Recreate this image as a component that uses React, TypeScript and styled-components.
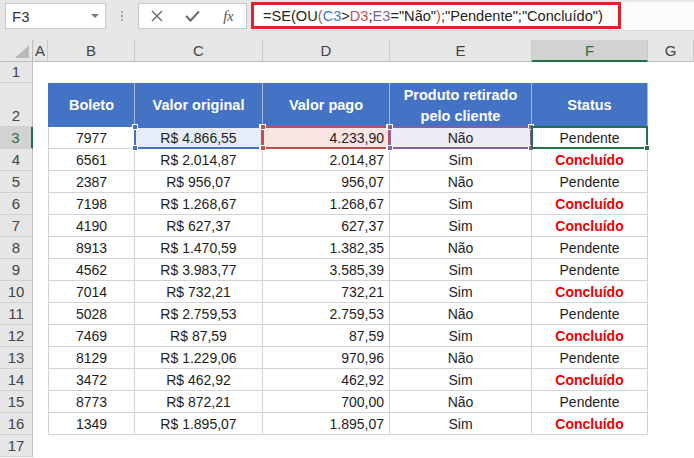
import React from "react";
import styled, { createGlobalStyle, css } from "styled-components";

const GlobalStyle = createGlobalStyle`
  html, body {
    margin: 0;
    padding: 0;
    background: #fff;
  }
  body {
    font-family: "Liberation Sans", Arial, sans-serif;
    overflow: hidden;
  }
`;

const COLS = "33px 15px 87px 128px 127px 142px 116px 1fr";
const GREEN = "#217346";
const GRID = "#d4d4d4";

type Hl = "blue" | "red" | "purple" | "green";

const HL: Record<Hl, { line: string; fill: string }> = {
  blue: { line: "#4472c4", fill: "#e7edf8" },
  red: { line: "#c0504d", fill: "#fbe4e4" },
  purple: { line: "#8064a2", fill: "#f0ecf6" },
  green: { line: GREEN, fill: "#ffffff" },
};

/* ---------- formula toolbar ---------- */

const Toolbar = styled.div`
  display: flex;
  align-items: flex-start;
  height: 40px;
  padding-top: 2px;
  box-sizing: border-box;
  background: #e6e6e6;
`;

const NameBox = styled.div`
  display: flex;
  align-items: center;
  justify-content: space-between;
  width: 101px;
  height: 26px;
  margin: 1px 0 0 5px;
  padding: 0 6px;
  box-sizing: border-box;
  background: #fff;
  border: 1px solid #c9c9c9;
  font-size: 15px;
  color: #333;
`;

const DropArrow = styled.span`
  width: 0;
  height: 0;
  border-left: 4px solid transparent;
  border-right: 4px solid transparent;
  border-top: 4px solid #7a7a7a;
`;

const Grip = styled.div`
  display: flex;
  flex-direction: column;
  align-items: center;
  gap: 2px;
  width: 32px;
  padding-top: 9px;

  span {
    width: 2px;
    height: 2px;
    background: #a8a8a8;
  }
`;

const Buttons = styled.div`
  display: flex;
  align-items: center;
  width: 109px;
  height: 26px;
  margin-top: 1px;
  box-sizing: border-box;
  background: #fff;
  border: 1px solid #c9c9c9;
`;

const IconSlot = styled.div`
  display: flex;
  align-items: center;
  justify-content: center;
  width: 36px;
  height: 100%;
  color: #6e6e6e;
`;

const Fx = styled.span`
  font-family: "Liberation Serif", "Times New Roman", serif;
  font-style: italic;
  font-size: 15px;
  color: #555;
  letter-spacing: -0.5px;
`;

const FormulaBar = styled.div`
  flex: 1;
  height: 28px;
  margin-left: 4px;
  background: #fbfbfb;
  border-bottom: 1px solid #d6d6d6;
`;

const FormulaInput = styled.div`
  display: flex;
  align-items: center;
  width: 370px;
  height: 27px;
  padding-left: 9px;
  box-sizing: border-box;
  background: #fff;
  border: 3px solid #e1202b;
  font-size: 14.6px;
  color: #222;
  white-space: nowrap;
`;

const Ref = styled.span<{ $c: string }>`
  color: ${(p) => p.$c};
`;

/* ---------- sheet ---------- */

const Row = styled.div<{ $h: number }>`
  display: grid;
  grid-template-columns: ${COLS};
  height: ${(p) => p.$h}px;
`;

const Corner = styled.div`
  position: relative;
  background: #e6e6e6;
  border-right: 1px solid #bdbdbd;
  border-bottom: 1px solid #bdbdbd;
  box-sizing: border-box;

  svg {
    position: absolute;
    right: 3px;
    bottom: 3px;
  }
`;

const ColHead = styled.div<{ $active?: boolean }>`
  display: flex;
  align-items: center;
  justify-content: center;
  box-sizing: border-box;
  background: #e6e6e6;
  border-right: 1px solid #cacaca;
  border-bottom: 1px solid #bdbdbd;
  font-size: 15px;
  color: #444;
  ${(p) =>
    p.$active &&
    css`
      background: #d2d2d2;
      color: ${GREEN};
      border-bottom: 2px solid ${GREEN};
    `}
`;

const RowHead = styled.div<{ $active?: boolean }>`
  display: flex;
  align-items: flex-end;
  justify-content: center;
  padding-bottom: 2px;
  box-sizing: border-box;
  background: #e6e6e6;
  border-right: 1px solid #bdbdbd;
  border-bottom: 1px solid #d0d0d0;
  font-size: 15px;
  color: #444;
  ${(p) =>
    p.$active &&
    css`
      background: #d2d2d2;
      color: ${GREEN};
      border-right: 2px solid ${GREEN};
    `}
`;

const Blank = styled.div``;

const HeadCell = styled.div<{ $first?: boolean }>`
  display: flex;
  align-items: center;
  justify-content: center;
  text-align: center;
  box-sizing: border-box;
  background: #4472c4;
  border-right: 1px solid #a4b8e2;
  border-left: ${(p) => (p.$first ? "1px solid #4472c4" : "none")};
  color: #fff;
  font-weight: bold;
  font-size: 14.5px;
  line-height: 21px;
  padding-top: 1px;
`;

const Cell = styled.div<{
  $align?: "center" | "right";
  $first?: boolean;
  $hl?: Hl;
  $status?: "done";
}>`
  position: relative;
  display: flex;
  align-items: center;
  justify-content: ${(p) => (p.$align === "right" ? "flex-end" : "center")};
  padding: 1px ${(p) => (p.$align === "right" ? "5px" : "0")} 0 0;
  box-sizing: border-box;
  background: ${(p) => (p.$hl ? HL[p.$hl].fill : "#fff")};
  border-right: 1px solid ${GRID};
  border-bottom: 1px solid ${GRID};
  border-left: ${(p) => (p.$first ? `1px solid ${GRID}` : "none")};
  font-size: 14px;
  color: #1d1d1d;
  ${(p) =>
    p.$status === "done" &&
    css`
      color: #ee0000;
      font-weight: bold;
    `}
`;

const Frame = styled.div<{ $hl: Hl }>`
  position: absolute;
  left: -1px;
  top: -1px;
  right: -1px;
  bottom: -1px;
  border: 2px solid ${(p) => HL[p.$hl].line};
  pointer-events: none;
  z-index: 1;
`;

const Handle = styled.span<{ $hl: Hl; $x: "l" | "r"; $y: "t" | "b" }>`
  position: absolute;
  width: 6px;
  height: 6px;
  background: ${(p) => HL[p.$hl].line};
  border: 1px solid #fff;
  box-sizing: border-box;
  ${(p) => (p.$x === "l" ? "left: -4px;" : "right: -4px;")}
  ${(p) => (p.$y === "t" ? "top: -4px;" : "bottom: -4px;")}
`;

const Selection: React.FC<{ hl: Hl; handles: Array<["l" | "r", "t" | "b"]> }> = ({
  hl,
  handles,
}) => (
  <Frame $hl={hl}>
    {handles.map(([x, y]) => (
      <Handle key={x + y} $hl={hl} $x={x} $y={y} />
    ))}
  </Frame>
);

const ALL: Array<["l" | "r", "t" | "b"]> = [
  ["l", "t"],
  ["r", "t"],
  ["l", "b"],
  ["r", "b"],
];

const data: Array<[string, string, string, string]> = [
  ["7977", "4.866,55", "4.233,90", "Não"],
  ["6561", "2.014,87", "2.014,87", "Sim"],
  ["2387", "956,07", "956,07", "Não"],
  ["7198", "1.268,67", "1.268,67", "Sim"],
  ["4190", "627,37", "627,37", "Sim"],
  ["8913", "1.470,59", "1.382,35", "Não"],
  ["4562", "3.983,77", "3.585,39", "Sim"],
  ["7014", "732,21", "732,21", "Sim"],
  ["5028", "2.759,53", "2.759,53", "Não"],
  ["7469", "87,59", "87,59", "Sim"],
  ["8129", "1.229,06", "970,96", "Não"],
  ["3472", "462,92", "462,92", "Sim"],
  ["8773", "872,21", "700,00", "Não"],
  ["1349", "1.895,07", "1.895,07", "Sim"],
];

const toNum = (s: string) => parseFloat(s.replace(/\./g, "").replace(",", "."));

const letters = ["A", "B", "C", "D", "E", "F", "G"];

export default function App() {
  return (
    <>
      <GlobalStyle />
      <Toolbar>
        <NameBox>
          <span>F3</span>
          <DropArrow />
        </NameBox>
        <Grip>
          <span />
          <span />
          <span />
        </Grip>
        <Buttons>
          <IconSlot>
            <svg width="12" height="12" viewBox="0 0 12 12">
              <path d="M1 1 L11 11 M11 1 L1 11" stroke="#6e6e6e" strokeWidth="1.5" />
            </svg>
          </IconSlot>
          <IconSlot>
            <svg width="15" height="12" viewBox="0 0 15 12">
              <path d="M1 6 L5.5 10.5 L14 1.5" stroke="#6e6e6e" strokeWidth="2.2" fill="none" />
            </svg>
          </IconSlot>
          <IconSlot>
            <Fx>fx</Fx>
          </IconSlot>
        </Buttons>
        <FormulaBar>
          <FormulaInput>
            =SE(OU<Ref $c="#c0504d">(</Ref>
            <Ref $c="#4472c4">C3</Ref>&gt;<Ref $c="#c0504d">D3</Ref>;
            <Ref $c="#8064a2">E3</Ref>="Não"<Ref $c="#c0504d">)</Ref>;"Pendente";"Concluído")
          </FormulaInput>
        </FormulaBar>
      </Toolbar>

      <Row $h={22}>
        <Corner>
          <svg width="14" height="13" viewBox="0 0 14 13">
            <polygon points="14,0 14,13 0,13" fill="#b9b9b9" />
          </svg>
        </Corner>
        {letters.map((l) => (
          <ColHead key={l} $active={l === "F"}>
            {l}
          </ColHead>
        ))}
      </Row>

      <Row $h={21}>
        <RowHead>1</RowHead>
      </Row>

      <Row $h={44}>
        <RowHead>2</RowHead>
        <Blank />
        <HeadCell $first>Boleto</HeadCell>
        <HeadCell>Valor original</HeadCell>
        <HeadCell>Valor pago</HeadCell>
        <HeadCell>
          Produto retirado
          <br />
          pelo cliente
        </HeadCell>
        <HeadCell>Status</HeadCell>
      </Row>

      {data.map(([boleto, orig, pago, ret], i) => {
        const first = i === 0;
        const pending = toNum(orig) > toNum(pago) || ret === "Não";
        return (
          <Row $h={22} key={boleto}>
            <RowHead $active={first}>{i + 3}</RowHead>
            <Blank />
            <Cell $first>{boleto}</Cell>
            <Cell $hl={first ? "blue" : undefined}>
              R$ {orig}
              {first && <Selection hl="blue" handles={ALL} />}
            </Cell>
            <Cell $align="right" $hl={first ? "red" : undefined}>
              {pago}
              {first && <Selection hl="red" handles={ALL} />}
            </Cell>
            <Cell $hl={first ? "purple" : undefined}>
              {ret}
              {first && <Selection hl="purple" handles={ALL} />}
            </Cell>
            <Cell $status={pending ? undefined : "done"}>
              {pending ? "Pendente" : "Concluído"}
              {first && <Selection hl="green" handles={[["r", "b"]]} />}
            </Cell>
          </Row>
        );
      })}

      <Row $h={22}>
        <RowHead>17</RowHead>
      </Row>
    </>
  );
}
